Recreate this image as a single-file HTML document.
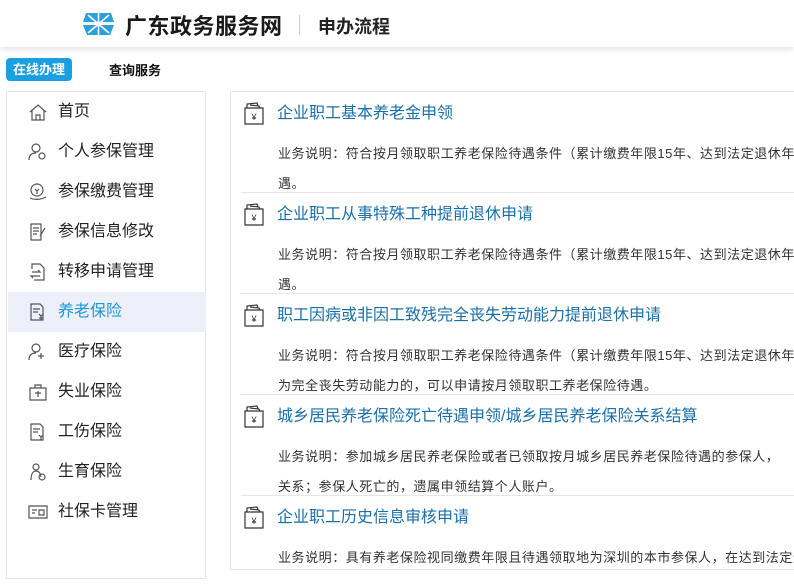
<!DOCTYPE html>
<html><head><meta charset="utf-8"><style>
*{margin:0;padding:0;box-sizing:border-box}
body{width:794px;height:586px;overflow:hidden;background:#fff;font-family:"Liberation Sans","Noto Sans CJK SC",sans-serif;position:relative;color:#333}
.hdr{position:absolute;left:0;top:0;width:794px;height:47px;background:#fff;box-shadow:0 2px 6px rgba(0,0,0,.12)}
.t1{position:absolute;left:125px;top:9px;font-size:22px;font-weight:bold;color:#1a1a1a;letter-spacing:0.5px}
.dv{position:absolute;left:299px;top:15px;width:1px;height:20px;background:#ccc}
.t2{position:absolute;left:318px;top:13px;font-size:18px;font-weight:bold;color:#222}
.tab1{position:absolute;left:6px;top:58px;width:66px;height:23px;background:#1a9fe0;border-radius:4px;color:#fff;font-size:13px;font-weight:bold;text-align:center;line-height:23px}
.tab2{position:absolute;left:109px;top:60px;font-size:13px;font-weight:bold;color:#111}
.side{position:absolute;left:6px;top:91px;width:200px;height:488px;border:1px solid #e6e6e6}
.it{position:absolute;left:1px;width:198px;height:40px;font-size:16px;color:#222;line-height:40px;padding-left:50px}
.it svg{position:absolute;left:20px;top:11px}
.it.on{background:#edf0fb;color:#1a9ad6}
.main{position:absolute;left:230px;top:91px;width:570px;height:479px;border:1px solid #e6e6e6;border-right:none;overflow:hidden}
.card{position:absolute;left:10px;width:570px;height:101px;border-bottom:1px solid #e6e6e6}
.card .ti{position:absolute;left:36px;top:7px;font-size:16px;color:#1a6fa8;white-space:nowrap}
.card svg{position:absolute;left:3px;top:9px}
.card .d{position:absolute;left:37px;font-size:13px;letter-spacing:0.55px;color:#333;white-space:nowrap}
</style></head><body>
<div class="hdr">
<svg style="position:absolute;left:83px;top:13px" width="31" height="22" viewBox="0 0 31 22"><path d="M3 0h25l3 9H0z" fill="#2aa0dc"/><path d="M0 12h31l-4 10H4z" fill="#2aa0dc"/><path d="M15.5 0v22M5 2l21 18M26 2L5 20M0 11h31" stroke="#fff" stroke-width="1.6"/><circle cx="15.5" cy="11" r="2" fill="#fff"/></svg>
<div class="t1">广东政务服务网</div><div class="dv"></div><div class="t2">申办流程</div>
</div>
<div class="tab1">在线办理</div><div class="tab2">查询服务</div>
<div class="side">
<div class="it" style="top:0">首页<svg width="20" height="18" viewBox="0 0 20 18" fill="none" stroke="#555" stroke-width="1.2"><path d="M2 9L10 2l8 7M4 7v10h12V7M8 17v-5h4v5"/></svg></div>
<div class="it" style="top:40px">个人参保管理<svg width="20" height="18" viewBox="0 0 20 18" fill="none" stroke="#555" stroke-width="1.2"><circle cx="8" cy="5" r="4"/><path d="M1 17c0-5 3-7 7-7"/><circle cx="14" cy="13" r="3"/></svg></div>
<div class="it" style="top:80px">参保缴费管理<svg width="20" height="18" viewBox="0 0 20 18" fill="none" stroke="#555" stroke-width="1.2"><circle cx="9" cy="7" r="6"/><path d="M2 15c4 2 10 2 16-1M7 6l2 2 2-2M9 8v3"/></svg></div>
<div class="it" style="top:120px">参保信息修改<svg width="20" height="18" viewBox="0 0 20 18" fill="none" stroke="#555" stroke-width="1.2"><path d="M3 1h10v16H3zM5 5h6M5 8h6M5 11h4M17 5l-5 8"/></svg></div>
<div class="it" style="top:160px">转移申请管理<svg width="20" height="18" viewBox="0 0 20 18" fill="none" stroke="#555" stroke-width="1.2"><path d="M4 6V1h8l4 4v12H6M4 9h8l-2-2M12 13H3l2 2"/></svg></div>
<div class="it on" style="top:200px">养老保险<svg width="20" height="18" viewBox="0 0 20 18" fill="none" stroke="#555" stroke-width="1.2"><path d="M3 1h9l3 3v13H3zM5 6h7M5 9h5M11 11l2 2 2-2M13 13v4M11 15h4"/></svg></div>
<div class="it" style="top:240px">医疗保险<svg width="20" height="18" viewBox="0 0 20 18" fill="none" stroke="#555" stroke-width="1.2"><circle cx="8" cy="5" r="4"/><path d="M1 17c0-5 3-7 7-7M13 10v6M10 13h6"/></svg></div>
<div class="it" style="top:280px">失业保险<svg width="20" height="18" viewBox="0 0 20 18" fill="none" stroke="#555" stroke-width="1.2"><path d="M2 5h16v12H2zM7 5V2h6v3M7 10h6M10 8v6"/></svg></div>
<div class="it" style="top:320px">工伤保险<svg width="20" height="18" viewBox="0 0 20 18" fill="none" stroke="#555" stroke-width="1.2"><path d="M3 1h9l3 3v13H3zM5 6h7M5 9h5M11 12l2 2 2-2M13 14v3"/></svg></div>
<div class="it" style="top:360px">生育保险<svg width="20" height="18" viewBox="0 0 20 18" fill="none" stroke="#555" stroke-width="1.2"><circle cx="8" cy="4" r="3"/><path d="M3 17c0-6 2-9 5-9s5 3 5 6"/><circle cx="14" cy="14" r="3"/></svg></div>
<div class="it" style="top:400px">社保卡管理<svg width="20" height="18" viewBox="0 0 20 18" fill="none" stroke="#555" stroke-width="1.2"><path d="M1 3h18v12H1zM4 7h5M4 10h3M11 7h5v5h-5z"/></svg></div>
</div>
<div class="main">
<div class="card" style="top:0"><svg width="20" height="24" viewBox="0 0 20 24" fill="none" stroke="#333" stroke-width="1.2"><path d="M1 7h18v16H1zM3 7V3l10-1 1 3M6 4l9 1 1 2"/><text x="10" y="19" font-size="9" text-anchor="middle" fill="#333" stroke="none">¥</text></svg><div class="ti">企业职工基本养老金申领</div><div class="d" style="top:51px">业务说明：符合按月领取职工养老保险待遇条件（累计缴费年限15年、达到法定退休年龄）</div><div class="d" style="top:81px">遇。</div></div>
<div class="card" style="top:101px"><svg width="20" height="24" viewBox="0 0 20 24" fill="none" stroke="#333" stroke-width="1.2"><path d="M1 7h18v16H1zM3 7V3l10-1 1 3M6 4l9 1 1 2"/><text x="10" y="19" font-size="9" text-anchor="middle" fill="#333" stroke="none">¥</text></svg><div class="ti">企业职工从事特殊工种提前退休申请</div><div class="d" style="top:51px">业务说明：符合按月领取职工养老保险待遇条件（累计缴费年限15年、达到法定退休年龄）</div><div class="d" style="top:81px">遇。</div></div>
<div class="card" style="top:202px"><svg width="20" height="24" viewBox="0 0 20 24" fill="none" stroke="#333" stroke-width="1.2"><path d="M1 7h18v16H1zM3 7V3l10-1 1 3M6 4l9 1 1 2"/><text x="10" y="19" font-size="9" text-anchor="middle" fill="#333" stroke="none">¥</text></svg><div class="ti">职工因病或非因工致残完全丧失劳动能力提前退休申请</div><div class="d" style="top:51px">业务说明：符合按月领取职工养老保险待遇条件（累计缴费年限15年、达到法定退休年龄）</div><div class="d" style="top:81px">为完全丧失劳动能力的，可以申请按月领取职工养老保险待遇。</div></div>
<div class="card" style="top:303px"><svg width="20" height="24" viewBox="0 0 20 24" fill="none" stroke="#333" stroke-width="1.2"><path d="M1 7h18v16H1zM3 7V3l10-1 1 3M6 4l9 1 1 2"/><text x="10" y="19" font-size="9" text-anchor="middle" fill="#333" stroke="none">¥</text></svg><div class="ti">城乡居民养老保险死亡待遇申领/城乡居民养老保险关系结算</div><div class="d" style="top:51px">业务说明：参加城乡居民养老保险或者已领取按月城乡居民养老保险待遇的参保人，</div><div class="d" style="top:81px">关系；参保人死亡的，遗属申领结算个人账户。</div></div>
<div class="card" style="top:404px;border-bottom:none"><svg width="20" height="24" viewBox="0 0 20 24" fill="none" stroke="#333" stroke-width="1.2"><path d="M1 7h18v16H1zM3 7V3l10-1 1 3M6 4l9 1 1 2"/><text x="10" y="19" font-size="9" text-anchor="middle" fill="#333" stroke="none">¥</text></svg><div class="ti">企业职工历史信息审核申请</div><div class="d" style="top:51px">业务说明：具有养老保险视同缴费年限且待遇领取地为深圳的本市参保人，在达到法定退休</div></div>
</div>
</body></html>
